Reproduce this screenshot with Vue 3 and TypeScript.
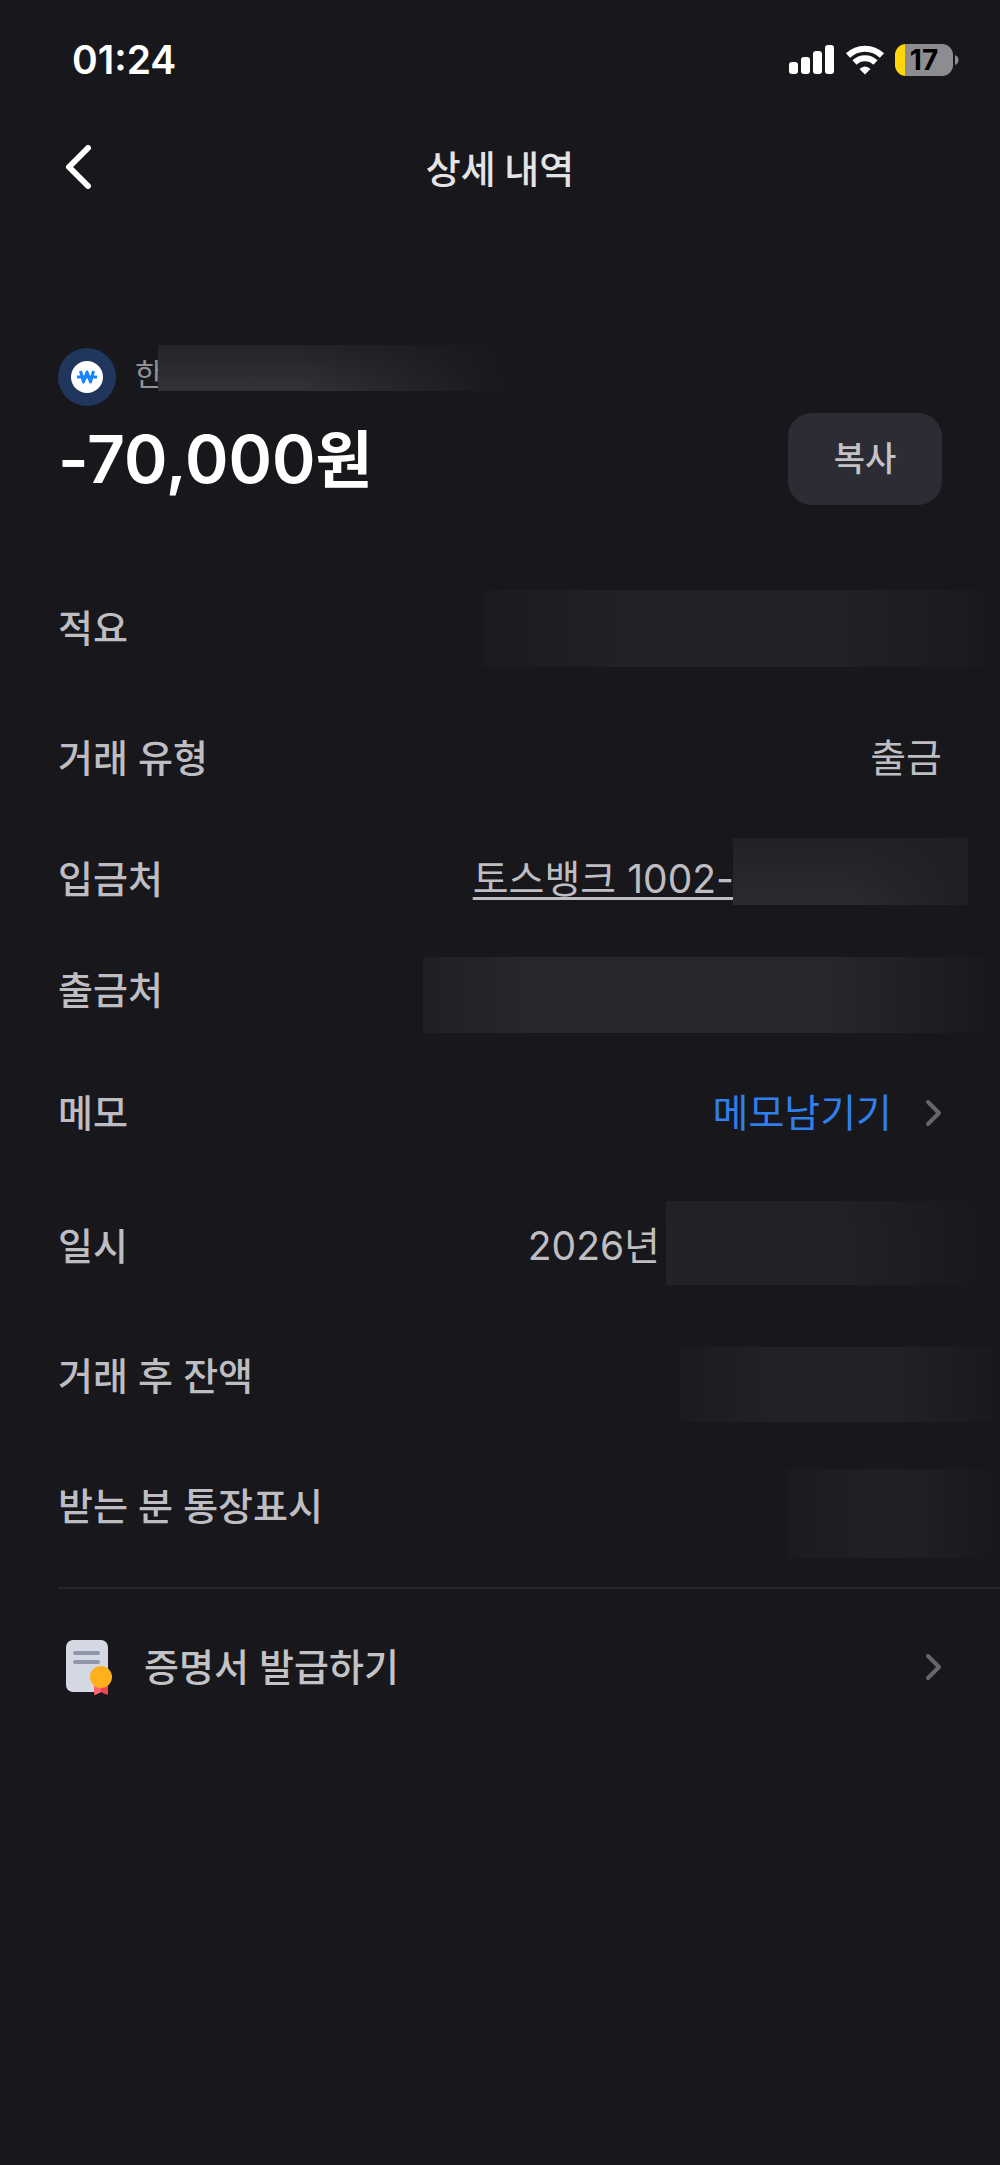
<script setup lang="ts">
interface Mask {
  top: number
  right: number
  width: number
  height: number
  tone: string
}

interface Detail {
  label: string
  size?: 'compact' | 'tall'
  value?: string
  kind?: 'text' | 'account' | 'memo' | 'date'
  mask?: Mask
}

const details: Detail[] = [
  { label: '적요', mask: { top: 27, right: 16, width: 501, height: 77, tone: 'even' } },
  { label: '거래 유형', value: '출금', kind: 'text' },
  {
    label: '입금처',
    size: 'compact',
    value: '토스뱅크 1002-',
    kind: 'account',
    mask: { top: 15, right: 32, width: 235, height: 67, tone: 'rising' },
  },
  { label: '출금처', size: 'compact', mask: { top: 23, right: 10, width: 567, height: 76, tone: 'strong' } },
  { label: '메모', size: 'tall', value: '메모남기기', kind: 'memo' },
  {
    label: '일시',
    value: '2026년',
    kind: 'date',
    mask: { top: 20, right: 10, width: 324, height: 84, tone: 'trailing' },
  },
  { label: '거래 후 잔액', mask: { top: 36, right: 8, width: 313, height: 75, tone: 'even' } },
  { label: '받는 분 통장표시', mask: { top: 28, right: 0, width: 213, height: 89, tone: 'faint' } },
]

function maskStyle(mask: Mask) {
  return {
    top: `${mask.top}px`,
    right: `${mask.right}px`,
    width: `${mask.width}px`,
    height: `${mask.height}px`,
  }
}
</script>

<template>
  <div class="screen">
    <div class="status">
      <time class="clock">01:24</time>
      <div class="status-icons">
        <svg class="signal" width="46" height="30" viewBox="0 0 46 30" aria-hidden="true">
          <rect x="0" y="17" width="9" height="12" rx="3" />
          <rect x="12" y="12" width="9" height="17" rx="3" />
          <rect x="24" y="6" width="9" height="23" rx="3" />
          <rect x="36" y="0" width="9" height="29" rx="3" />
        </svg>
        <svg class="wifi" width="40" height="30" viewBox="0 0 40 30" aria-hidden="true">
          <path d="M3 10.500 A24.500 24.500 0 0 1 37 10.500" />
          <path d="M9.500 17.500 A15 15 0 0 1 30.500 17.500" />
          <path class="dot" d="M20 29.500 L14.500 24 Q20 19 25.500 24 Z" />
        </svg>
        <div class="battery">
          <span class="battery-level">17</span>
        </div>
        <svg width="5" height="12" viewBox="0 0 5 12" aria-hidden="true">
          <path d="M1 1 Q4.500 2.500 4.500 6 T1 11 Z" fill="#8d8d91" />
        </svg>
      </div>
    </div>

    <header class="nav">
      <button class="back" type="button" aria-label="뒤로">
        <svg width="28" height="44" viewBox="0 0 28 44" aria-hidden="true">
          <path d="M23 3 L4 22 L23 41" />
        </svg>
      </button>
      <h1 class="title">상세 내역</h1>
      <span></span>
    </header>

    <main>
      <section class="summary">
        <div class="payee">
          <svg width="58" height="58" viewBox="0 0 58 58" aria-hidden="true">
            <circle cx="29" cy="29" r="29" fill="#20365c" />
            <circle cx="29" cy="29" r="16" fill="#fff" />
            <g fill="none" stroke="#1684ff" stroke-width="3" stroke-linejoin="round">
              <path d="M22.500 23 L25.500 34 L29 24 L32.500 34 L35.500 23" />
              <path d="M19 29 H39" />
            </g>
          </svg>
          <span class="payee-name">한</span>
          <span class="mask payee-mask"></span>
        </div>
        <div class="amount-row">
          <strong class="amount">-70,000<span class="won">원</span></strong>
          <button class="copy" type="button">복사</button>
        </div>
      </section>

      <dl class="details">
        <div v-for="row in details" :key="row.label" class="row" :class="row.size">
          <dt>{{ row.label }}</dt>
          <dd :class="row.kind">
            <a v-if="row.kind === 'account'" href="#">{{ row.value }}</a>
            <button v-else-if="row.kind === 'memo'" class="memo-button" type="button">
              {{ row.value }}
              <svg class="chevron" width="18" height="28" viewBox="0 0 18 28" aria-hidden="true">
                <path d="M4 3 L15 14 L4 25" />
              </svg>
            </button>
            <template v-else>{{ row.value }}</template>
          </dd>
          <span v-if="row.mask" class="mask" :class="row.mask.tone" :style="maskStyle(row.mask)"></span>
        </div>
      </dl>

      <button class="certificate" type="button">
        <svg width="48" height="58" viewBox="0 0 48 58" aria-hidden="true">
          <rect x="0" y="2" width="42" height="52" rx="7" fill="#d3d8e2" />
          <path d="M9 15 H32 M9 24 H32" stroke="#9197a6" stroke-width="4" stroke-linecap="round" />
          <path d="M28 44 H42 V55 Q42 58 39 56 L35 54 L31 56 Q28 58 28 55 Z" fill="#f04452" />
          <path d="M28 44 H35 V54 L31 56 Q28 58 28 55 Z" fill="#ff6370" />
          <circle cx="35" cy="39" r="11" fill="#ffb01c" />
        </svg>
        <span class="certificate-label">증명서 발급하기</span>
        <svg class="chevron" width="18" height="28" viewBox="0 0 18 28" aria-hidden="true">
          <path d="M4 3 L15 14 L4 25" />
        </svg>
      </button>
    </main>
  </div>
</template>

<style>
body {
  margin: 0;
  background: #18171c;
}
</style>

<style scoped>
.screen {
  min-height: 100vh;
  background: #18171c;
  color: #bebec2;
  font-family: Inter, 'Noto Sans CJK KR', sans-serif;
  font-size: 38px;
  line-height: 56px;
}

button {
  margin: 0;
  padding: 0;
  border: 0;
  background: none;
  color: inherit;
  font: inherit;
  cursor: pointer;
}

svg {
  display: block;
  flex: none;
}

.status {
  display: flex;
  align-items: center;
  justify-content: space-between;
  height: 120px;
  padding: 0 41px 0 72px;
}

.clock {
  color: #fff;
  font-size: 39px;
  font-weight: 600;
}

.status-icons {
  display: flex;
  align-items: center;
}

.signal {
  margin-right: 10px;
  fill: #fff;
}

.wifi {
  margin-right: 10px;
  fill: none;
  stroke: #fff;
  stroke-width: 6;
}

.wifi .dot {
  fill: #fff;
  stroke: none;
}

.battery {
  width: 58px;
  height: 32px;
  margin-right: 1px;
  border-radius: 11px;
  background: linear-gradient(90deg, #ffd60a 10px, #8d8d91 10px);
  text-align: center;
}

.battery-level {
  display: block;
  color: #000;
  font-size: 28px;
  font-weight: 700;
  line-height: 32px;
}

.nav {
  display: grid;
  grid-template-columns: 1fr auto 1fr;
  align-items: center;
  height: 94px;
  padding: 0 65px;
}

.back {
  justify-self: start;
}

.back svg {
  fill: none;
  stroke: #fff;
  stroke-width: 6;
  stroke-linecap: round;
  stroke-linejoin: round;
}

.title {
  margin: 0;
  color: #e4e4e6;
  font-family: 'Noto Sans CJK KR', sans-serif;
  font-size: 38px;
  font-weight: 500;
}

.summary {
  padding: 134px 58px 0;
}

.payee {
  position: relative;
  display: flex;
  align-items: flex-start;
  gap: 19px;
  height: 58px;
}

.payee-name {
  color: #929296;
  font-size: 30px;
  line-height: 52px;
}

.amount-row {
  display: flex;
  align-items: center;
  justify-content: space-between;
  height: 92px;
  margin-top: 7px;
}

.amount {
  color: #fff;
  font-size: 66px;
  font-weight: 600;
  line-height: 92px;
}

.won {
  font-size: 62px;
  line-height: 62px;
}

.copy {
  width: 154px;
  height: 92px;
  border-radius: 24px;
  background: #2c2c35;
  color: #c3c3c6;
  font-size: 34px;
  font-weight: 500;
}

.details {
  margin: 58px 0 0;
  padding-bottom: 16px;
}

.row {
  position: relative;
  display: flex;
  align-items: center;
  justify-content: space-between;
  height: 130px;
  padding: 0 58px;
}

.row.compact {
  height: 111px;
}

.row.tall {
  height: 136px;
}

dt {
  font-weight: 500;
}

dd {
  margin: 0;
  font-size: 39px;
}

dd.account {
  padding-right: 208px;
}

dd.date {
  padding-right: 282px;
}

dd a {
  color: inherit;
  text-decoration: underline;
  text-decoration-thickness: 3px;
  text-underline-offset: 4px;
  text-decoration-skip-ink: none;
}

.memo-button {
  display: flex;
  align-items: center;
  gap: 32px;
  color: #2f7fec;
}

.chevron {
  fill: none;
  stroke: #66666f;
  stroke-width: 4;
  stroke-linecap: round;
  stroke-linejoin: round;
}

.mask {
  position: absolute;
  background: #222226;
}

.payee-mask {
  top: -3px;
  left: 100px;
  width: 352px;
  height: 46px;
  background:
    linear-gradient(90deg, transparent 40%, #18171c),
    linear-gradient(180deg, #232428, #323237);
}

.even {
  background: linear-gradient(90deg, #1b1a1f, #222126 30%, #232227 65%, #1a191e);
}

.rising {
  background:
    linear-gradient(90deg, transparent 50%, #1f1e23),
    linear-gradient(180deg, #222126, #2b2a2f);
}

.strong {
  background: linear-gradient(90deg, #202024, #28282c 20%, #27272c 70%, #19181d);
}

.trailing {
  background:
    linear-gradient(90deg, transparent 50%, #18171c),
    linear-gradient(180deg, #202226, #232227 40%);
}

.faint {
  background: linear-gradient(90deg, #1b1a1f, #212025 45%, #1f1e23 65%, #18171c);
}

.certificate {
  display: flex;
  align-items: center;
  width: calc(100% - 58px);
  height: 158px;
  margin-left: 58px;
  padding: 0 58px 0 8px;
  border-top: 2px solid #26252a;
  text-align: left;
}

.certificate-label {
  flex: 1;
  margin-left: 30px;
  color: #c3c3c6;
  font-weight: 500;
}
</style>
